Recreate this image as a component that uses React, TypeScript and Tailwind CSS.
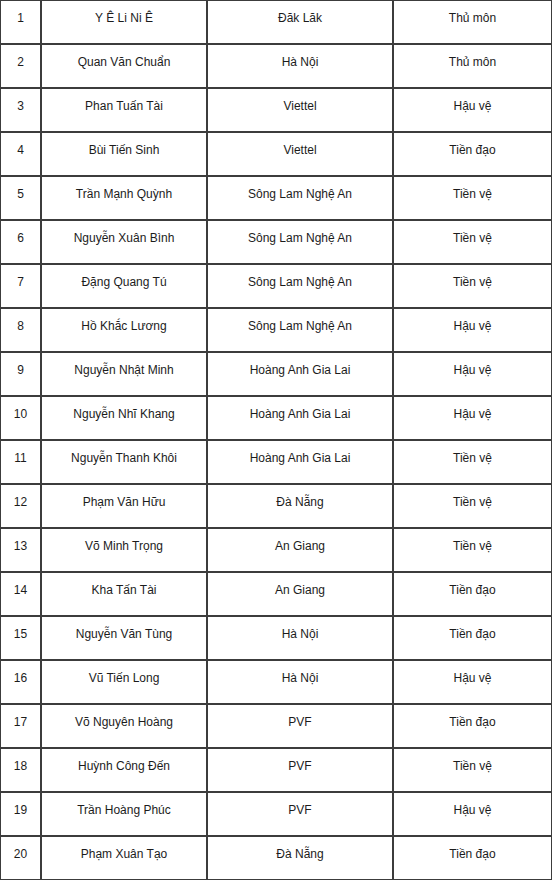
import React from "react";

const rows: [string, string, string][] = [
  ["Y Ê Li Ni Ê", "Đăk Lăk", "Thủ môn"],
  ["Quan Văn Chuẩn", "Hà Nội", "Thủ môn"],
  ["Phan Tuấn Tài", "Viettel", "Hậu vệ"],
  ["Bùi Tiến Sinh", "Viettel", "Tiền đạo"],
  ["Trần Mạnh Quỳnh", "Sông Lam Nghệ An", "Tiền vệ"],
  ["Nguyễn Xuân Bình", "Sông Lam Nghệ An", "Tiền vệ"],
  ["Đặng Quang Tú", "Sông Lam Nghệ An", "Tiền vệ"],
  ["Hồ Khắc Lương", "Sông Lam Nghệ An", "Hậu vệ"],
  ["Nguyễn Nhật Minh", "Hoàng Anh Gia Lai", "Hậu vệ"],
  ["Nguyễn Nhĩ Khang", "Hoàng Anh Gia Lai", "Hậu vệ"],
  ["Nguyễn Thanh Khôi", "Hoàng Anh Gia Lai", "Tiền vệ"],
  ["Phạm Văn Hữu", "Đà Nẵng", "Tiền vệ"],
  ["Võ Minh Trọng", "An Giang", "Tiền vệ"],
  ["Kha Tấn Tài", "An Giang", "Tiền đạo"],
  ["Nguyễn Văn Tùng", "Hà Nội", "Tiền đạo"],
  ["Vũ Tiến Long", "Hà Nội", "Hậu vệ"],
  ["Võ Nguyên Hoàng", "PVF", "Tiền đạo"],
  ["Huỳnh Công Đến", "PVF", "Tiền vệ"],
  ["Trần Hoàng Phúc", "PVF", "Hậu vệ"],
  ["Phạm Xuân Tạo", "Đà Nẵng", "Tiền đạo"],
];

const cell =
  "h-[44px] border border-[#3c3c3c] pt-[10px] text-center text-[12px] leading-[14px] text-[#1c1c1c]";

export default function App() {
  return (
    <div
      className="w-[552px] bg-white"
      style={{ fontFamily: '"Liberation Sans", Arial, sans-serif' }}
    >
      <div className="grid grid-cols-[41px_166px_186px_159px]">
        {rows.map((r, i) => (
          <React.Fragment key={i}>
            <div className={cell}>{i + 1}</div>
            <div className={cell}>{r[0]}</div>
            <div className={cell}>{r[1]}</div>
            <div className={cell}>{r[2]}</div>
          </React.Fragment>
        ))}
      </div>
    </div>
  );
}
